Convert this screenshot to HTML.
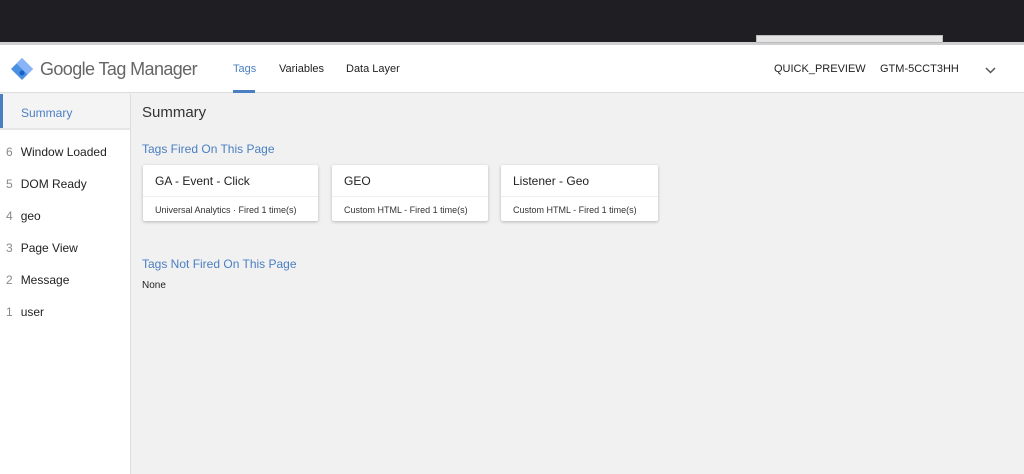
<!DOCTYPE html>
<html><head><style>
*{margin:0;padding:0;box-sizing:border-box}
body{width:1024px;height:474px;overflow:hidden;background:#f1f1f1;font-family:"Liberation Sans",Arial,sans-serif;position:relative;color:#222}
.top{position:absolute;left:0;top:0;width:1024px;height:42px;background:#1f1e22}
.topline{position:absolute;left:0;top:42px;width:1024px;height:3px;background:#cfcfd1}
.box{position:absolute;left:756px;top:35px;width:187px;height:8px;background:#e4e4e4;border:1px solid #bbb}
.hdr{position:absolute;left:0;top:45px;width:1024px;height:48px;background:#fff;border-bottom:1px solid #ddd}
.t{position:absolute;white-space:nowrap}
.side{position:absolute;left:0;top:94px;width:131px;height:380px;background:#fff;border-right:1px solid #ddd}
.sum{position:absolute;left:0;top:0;width:130px;height:36px;background:#f4f4f4;border-bottom:2px solid #e6e6e6}
.card{position:absolute;top:165px;height:56px;background:#fff;box-shadow:0 1px 3px rgba(0,0,0,.25);border-radius:2px}
.card .h{position:absolute;left:12px;top:9px;font-size:12px;color:#222}
.card .d{position:absolute;left:0;right:0;top:31px;border-top:1px solid #eee}
.card .s{position:absolute;left:12px;top:40px;font-size:9px;color:#333}
.it{position:absolute;left:6px;font-size:12px;color:#222}
.it span{color:#888;margin-right:8px}
</style></head><body>
<div class="top"></div><div class="topline"></div><div class="box"></div>
<div class="hdr">
<svg style="position:absolute;left:10px;top:12px" width="24" height="24" viewBox="0 0 24 24"><path d="M12 1 L23 12 L12 23 L1 12Z" fill="#4a90e2"/><path d="M12 1 L23 12 L17.5 17.5 L6.5 6.5Z" fill="#8ab4f8"/><circle cx="12" cy="16" r="2.5" fill="#1a5fc8"/></svg>
<div class="t" style="left:40px;top:14px;font-size:18px;letter-spacing:-0.6px;color:#666">Google Tag Manager</div>
<div class="t" style="left:233px;top:18px;font-size:11px;color:#4a7fc1">Tags</div>
<div style="position:absolute;left:233px;top:45px;width:22px;height:3px;background:#4a7fc1"></div>
<div class="t" style="left:279px;top:18px;font-size:11px">Variables</div>
<div class="t" style="left:346px;top:18px;font-size:11px">Data Layer</div>
<div class="t" style="left:774px;top:18px;font-size:11px">QUICK_PREVIEW</div>
<div class="t" style="left:880px;top:18px;font-size:11px">GTM-5CCT3HH</div>
<svg style="position:absolute;left:985px;top:22px" width="11" height="7" viewBox="0 0 11 7"><path d="M1 1 L5.5 5.5 L10 1" stroke="#555" stroke-width="1.5" fill="none"/></svg>
</div>
<div class="side">
<div class="sum"><div style="position:absolute;left:0;top:0;width:3px;height:34px;background:#4a7fc1"></div><div class="t" style="left:21px;top:12px;font-size:12px;color:#4a7fc1">Summary</div></div>
<div class="it" style="top:51px"><span>6</span>Window Loaded</div>
<div class="it" style="top:83px"><span>5</span>DOM Ready</div>
<div class="it" style="top:115px"><span>4</span>geo</div>
<div class="it" style="top:147px"><span>3</span>Page View</div>
<div class="it" style="top:179px"><span>2</span>Message</div>
<div class="it" style="top:211px"><span>1</span>user</div>
</div>
<div class="t" style="left:142px;top:104px;font-size:15px;color:#333">Summary</div>
<div class="t" style="left:142px;top:142px;font-size:12px;color:#4a7fc1">Tags Fired On This Page</div>
<div class="card" style="left:143px;width:175px"><div class="h">GA - Event - Click</div><div class="d"></div><div class="s">Universal Analytics · Fired 1 time(s)</div></div>
<div class="card" style="left:332px;width:156px"><div class="h">GEO</div><div class="d"></div><div class="s">Custom HTML - Fired 1 time(s)</div></div>
<div class="card" style="left:501px;width:157px"><div class="h">Listener - Geo</div><div class="d"></div><div class="s">Custom HTML - Fired 1 time(s)</div></div>
<div class="t" style="left:142px;top:257px;font-size:12px;color:#4a7fc1">Tags Not Fired On This Page</div>
<div class="t" style="left:142px;top:280px;font-size:10px;color:#222">None</div>
</body></html>
